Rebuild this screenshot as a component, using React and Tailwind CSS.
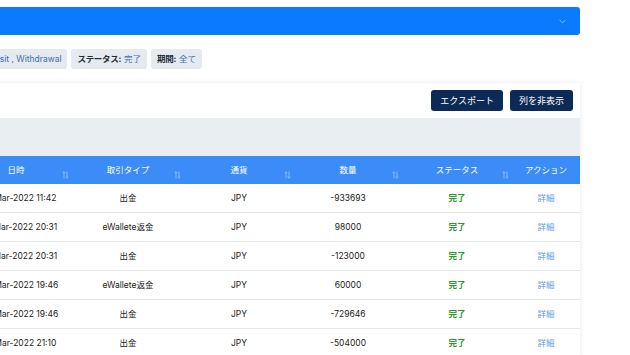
import { ChevronDown } from 'lucide-react';

const rows = [
  { date: '21-Mar-2022 11:42', type: '出金', cur: 'JPY', amount: '-933693' },
  { date: '21-Mar-2022 20:31', type: 'eWallete返金', cur: 'JPY', amount: '98000' },
  { date: '21-Mar-2022 20:31', type: '出金', cur: 'JPY', amount: '-123000' },
  { date: '20-Mar-2022 19:46', type: 'eWallete返金', cur: 'JPY', amount: '60000' },
  { date: '20-Mar-2022 19:46', type: '出金', cur: 'JPY', amount: '-729646' },
  { date: '19-Mar-2022 21:10', type: '出金', cur: 'JPY', amount: '-504000' },
];

const cols = [
  { label: '日時', sort: true },
  { label: '取引タイプ', sort: true },
  { label: '通貨', sort: true },
  { label: '数量', sort: true },
  { label: 'ステータス', sort: true },
  { label: 'アクション', sort: false },
];

function SortIcon() {
  return (
    <svg width="7" height="8" viewBox="0 0 7 8" className="absolute right-[3px] top-[15px] opacity-50">
      <path d="M2 7.5V0.8M0.6 2.2L2 0.8L3.4 2.2" stroke="white" strokeWidth="0.8" fill="none" />
      <path d="M5 0.5V7.2M3.6 5.8L5 7.2L6.4 5.8" stroke="white" strokeWidth="0.8" fill="none" />
    </svg>
  );
}

function Chip({ label, value }) {
  return (
    <div className="h-[20px] px-[6px] flex items-center gap-[3px] rounded-[3px] bg-[#e4eaef] text-[8.5px] whitespace-nowrap">
      {label && <span className="font-bold text-[#1f2d3d] tracking-[-0.3px]">{label}</span>}
      <span className="text-[#3f6ea8]">{value}</span>
    </div>
  );
}

export default function App() {
  const grid = 'grid grid-cols-[112px_112px_110px_108px_110px_68px]';
  return (
    <div className="w-[630px] h-[355px] overflow-hidden bg-white" style={{ fontFamily: "Inter, 'Noto Sans CJK JP', sans-serif" }}>
      <div className="ml-[-40px] w-[620px] pt-[7px]">
        {/* collapsible filter bar */}
        <div className="h-[28px] bg-[#0a7bff] rounded-[3px] flex items-center justify-end pr-[12px]">
          <ChevronDown size={11} strokeWidth={1.3} className="text-white/80" />
        </div>

        {/* active filters */}
        <div className="mt-[14px] w-[242px] flex justify-end gap-[4px]">
          <Chip label="取引タイプ:" value="Deposit , Withdrawal" />
          <Chip label="ステータス:" value="完了" />
          <Chip label="期間:" value="全て" />
        </div>

        {/* table card */}
        <div className="mt-[14px] bg-white shadow-[0_0_6px_rgba(0,0,0,0.09)]">
          <div className="h-[35px] flex justify-end items-start pt-[7px] pr-[7px] gap-[7px]">
            <button className="h-[21px] px-[9px] rounded-[3px] bg-[#0c2a55] text-white text-[9px]">エクスポート</button>
            <button className="h-[21px] px-[9px] rounded-[3px] bg-[#0c2a55] text-white text-[9px]">列を非表示</button>
          </div>
          <div className="h-[38px] bg-[#e9eef2]" />
          <div className={`${grid} h-[28px] bg-[#3b8cf6] text-white text-[8.5px]`}>
            {cols.map((c) => (
              <div key={c.label} className="relative flex items-center justify-center">
                {c.label}
                {c.sort && <SortIcon />}
              </div>
            ))}
          </div>
          {rows.map((r, i) => (
            <div key={i} className={`${grid} h-[29px] border-b border-[#e6e9ec] text-[8.5px] text-[#222]`}>
              <div className="flex items-center justify-center pl-[6px]">{r.date}</div>
              <div className="flex items-center justify-center">{r.type}</div>
              <div className="flex items-center justify-center">{r.cur}</div>
              <div className="flex items-center justify-center">{r.amount}</div>
              <div className="flex items-center justify-center font-bold text-[#2a9a2a]">完了</div>
              <div className="flex items-center justify-center text-[#5b9be6]">詳細</div>
            </div>
          ))}
        </div>
      </div>
    </div>
  );
}
